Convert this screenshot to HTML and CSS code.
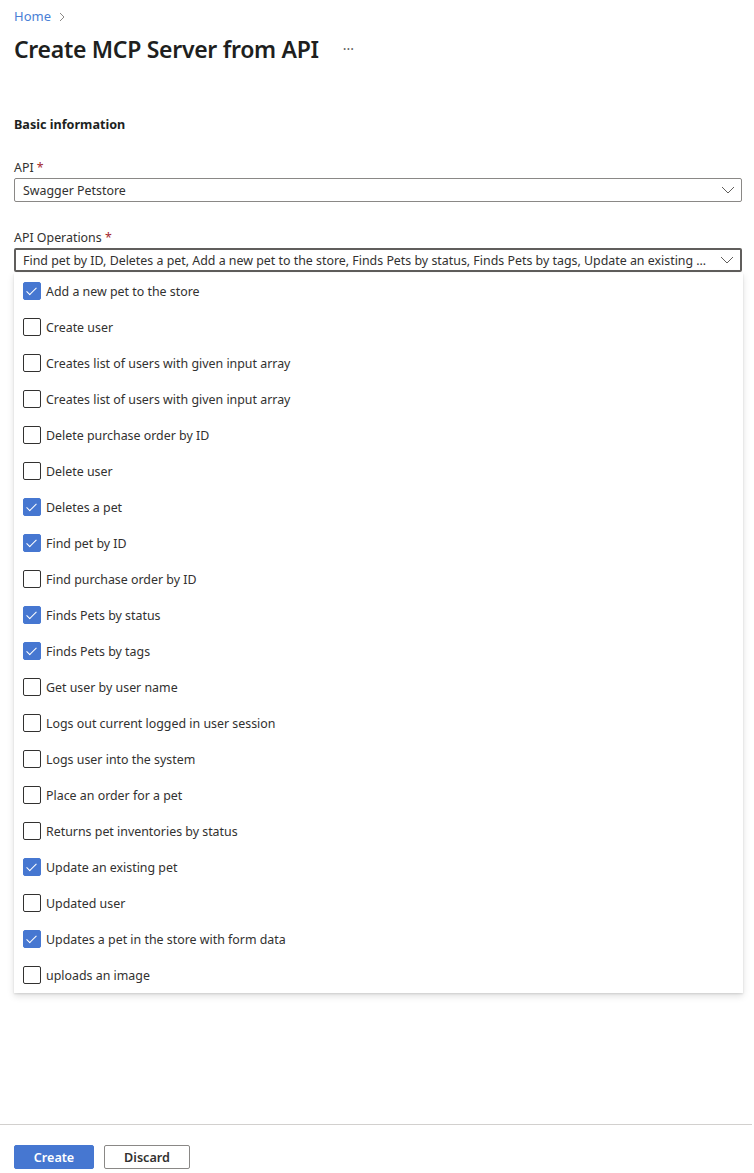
FILE: index.html
```html
<!DOCTYPE html>
<html lang="en">
<head>
<meta charset="utf-8">
<title>Create MCP Server from API</title>
<link rel="stylesheet" href="styles.css">
</head>
<body>
<div class="page">
  <main class="content">
    <nav class="breadcrumb">
      <a class="crumb" href="#">Home</a>
      <svg class="crumb-sep" width="8" height="10" viewBox="0 0 8 10"><polyline points="2,1 6,5 2,9" fill="none" stroke="#8a8886" stroke-width="1"/></svg>
    </nav>
    <header class="title-row">
      <h1 class="title">Create MCP Server from API</h1>
      <span class="more">···</span>
    </header>

    <h2 class="section">Basic information</h2>

    <div class="field field-api">
      <label class="label">API <span class="req">*</span></label>
      <div class="select">
        <span class="select-text">Swagger Petstore</span>
        <svg class="chev" width="14" height="8" viewBox="0 0 14 8"><polyline points="1,1 7,7 13,1" fill="none" stroke="#605e5c" stroke-width="1"/></svg>
      </div>
    </div>

    <div class="field field-ops">
      <label class="label">API Operations <span class="req">*</span></label>
      <div class="dropdown">
        <div class="select select-open">
          <span class="select-text">Find pet by ID, Deletes a pet, Add a new pet to the store, Finds Pets by status, Finds Pets by tags, Update an existing pet, Updates a pet in the store with form data</span>
          <svg class="chev" width="14" height="8" viewBox="0 0 14 8"><polyline points="1,1 7,7 13,1" fill="none" stroke="#605e5c" stroke-width="1"/></svg>
        </div>
        <ul class="menu">
          <li class="opt checked"><span class="box"></span>Add a new pet to the store</li>
          <li class="opt"><span class="box"></span>Create user</li>
          <li class="opt"><span class="box"></span>Creates list of users with given input array</li>
          <li class="opt"><span class="box"></span>Creates list of users with given input array</li>
          <li class="opt"><span class="box"></span>Delete purchase order by ID</li>
          <li class="opt"><span class="box"></span>Delete user</li>
          <li class="opt checked"><span class="box"></span>Deletes a pet</li>
          <li class="opt checked"><span class="box"></span>Find pet by ID</li>
          <li class="opt"><span class="box"></span>Find purchase order by ID</li>
          <li class="opt checked"><span class="box"></span>Finds Pets by status</li>
          <li class="opt checked"><span class="box"></span>Finds Pets by tags</li>
          <li class="opt"><span class="box"></span>Get user by user name</li>
          <li class="opt"><span class="box"></span>Logs out current logged in user session</li>
          <li class="opt"><span class="box"></span>Logs user into the system</li>
          <li class="opt"><span class="box"></span>Place an order for a pet</li>
          <li class="opt"><span class="box"></span>Returns pet inventories by status</li>
          <li class="opt checked"><span class="box"></span>Update an existing pet</li>
          <li class="opt"><span class="box"></span>Updated user</li>
          <li class="opt checked"><span class="box"></span>Updates a pet in the store with form data</li>
          <li class="opt"><span class="box"></span>uploads an image</li>
        </ul>
      </div>
    </div>
  </main>

  <footer class="footer">
    <button class="btn btn-primary">Create</button>
    <button class="btn btn-default">Discard</button>
  </footer>
</div>
</body>
</html>
```
FILE: styles.css
```css
* { box-sizing: border-box; }
html, body { margin: 0; padding: 0; background: #fff; }
body {
  font-family: "Noto Sans", "Open Sans", "Liberation Sans", sans-serif;
  font-size: 12.4px;
  color: #323130;
}
.page {
  height: 1173px;
  display: flex;
  flex-direction: column;
}
.content {
  flex: 1;
  padding: 5px 12px 0 14px;
}
.breadcrumb {
  display: flex;
  align-items: center;
  gap: 7px;
  height: 22px;
}
.crumb {
  color: #4a7fd6;
  text-decoration: none;
  font-size: 13px;
}
.crumb-sep { margin-top: 1px; }
.title-row {
  display: flex;
  align-items: center;
  gap: 24px;
  margin-top: 5px;
  height: 34px;
}
.title {
  margin: 0;
  font-size: 23px;
  font-weight: 600;
  color: #201f1e;
  letter-spacing: -0.3px;
}
.more {
  font-size: 14px;
  color: #605e5c;
  margin-top: -2px;
}
.section {
  margin: 50px 0 0 0;
  font-size: 12.6px;
  font-weight: 700;
  color: #201f1e;
  line-height: 18px;
}
.field { display: flex; flex-direction: column; }
.field-api { margin-top: 25px; }
.field-ops { margin-top: 27px; }
.label {
  line-height: 18px;
  height: 19px;
  color: #323130;
}
.req { color: #a4262c; }
.select {
  height: 24px;
  border: 1px solid #8a8886;
  border-radius: 2px;
  display: flex;
  align-items: center;
  padding: 0 6px 0 8px;
  gap: 12px;
  background: #fff;
}
.select-open { border-color: #605e5c; border-width: 2px; padding-left: 7px; }
.select-text {
  flex: 1;
  white-space: nowrap;
  overflow: hidden;
  text-overflow: ellipsis;
  color: #323130;
}
.chev { flex: none; }
.dropdown { position: relative; }
.menu {
  position: absolute;
  left: 0;
  right: -1px;
  top: 25px;
  margin: 0;
  padding: 0;
  list-style: none;
  background: #fff;
  box-shadow: 0 3px 7px rgba(0,0,0,0.13), 0 0.6px 1.8px rgba(0,0,0,0.11);
  z-index: 2;
}
.opt {
  height: 36px;
  display: flex;
  align-items: center;
  gap: 5px;
  padding-left: 9px;
  color: #323130;
}
.box {
  width: 18px;
  height: 18px;
  border: 1px solid #323130;
  border-radius: 2px;
  flex: none;
  position: relative;
}
.opt.checked .box {
  background: #4677d1;
  border-color: #4677d1;
}
.opt.checked .box::after {
  content: "";
  position: absolute;
  left: 5px;
  top: 2px;
  width: 4px;
  height: 9px;
  border: solid #fff;
  border-width: 0 1.3px 1.3px 0;
  transform: rotate(45deg);
}
.footer {
  border-top: 1px solid #d2d0ce;
  width: 752px;
  height: 49px;
  padding: 20px 0 0 14px;
  display: flex;
  gap: 10px;
  align-items: flex-start;
}
.btn {
  font-family: inherit;
  font-size: 12.6px;
  font-weight: 600;
  height: 24px;
  border-radius: 2px;
  padding: 0;
  display: flex;
  align-items: center;
  justify-content: center;
}
.btn-primary {
  width: 80px;
  background: #4677d1;
  border: 1px solid #4677d1;
  color: #fff;
}
.btn-default {
  width: 86px;
  background: #fff;
  border: 1px solid #8a8886;
  color: #323130;
}
```
